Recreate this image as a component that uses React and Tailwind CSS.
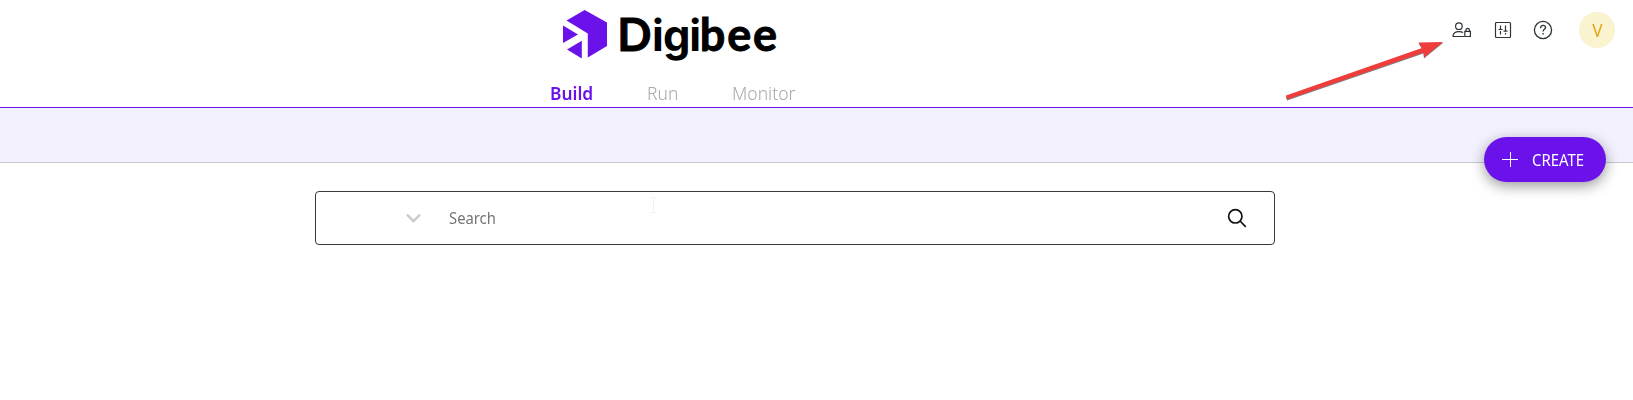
function Logo() {
  return (
    <div className="flex h-[70px] w-[240px]">
      <svg width="240" height="70" viewBox="0 0 240 70" aria-label="Digibee">
        <path d="M34.7 10 57 22.5V46L37.8 57.6V33.5L16.5 20.5Z" fill="#6b12ea" />
        <path d="M13 25.5 28 34.5 13 43Z" fill="#6b12ea" />
        <path d="M17 49.5 31.8 40.8V58.5Z" fill="#6b12ea" />
        <text
          y="50.500"
          x="67.300 102 113 139.300 149.700 177.300 203"
          fontSize="45"
          stroke="#000"
          strokeWidth="0.900"
          className="fill-black font-['Lato',sans-serif] font-bold"
        >
          D<tspan fontSize="43.500" strokeWidth="0" className="font-['Inter',sans-serif]">igi</tspan>bee
        </text>
      </svg>
    </div>
  );
}

function HeaderIcons() {
  return (
    <div className="mt-[12px] flex items-center text-[#2d3236]">
      <svg width="20" height="20" viewBox="0 0 20 20" fill="none" stroke="currentColor" strokeWidth="1.2">
        <circle cx="6.9" cy="6.2" r="3.3" />
        <path d="M12 16.500H1c0-3.300 2.200-4.900 6-4.900 1.700 0 3 .3 4.100 1" />
        <path d="M12.800 11.300h5.600v5.200h-5.600zM14 11.300V10a1.700 1.700 0 0 1 3.400 0v1.300" />
      </svg>
      <svg className="ml-[22px]" width="18" height="18" viewBox="0 0 18 18" fill="none" stroke="currentColor" strokeWidth="1.200">
        <rect x="1.500" y="1.500" width="15" height="15" rx="1" />
        <path d="M6.500 4.500V8M6.500 10v3.500M4.500 8.500h4M11.500 4.500V10M11.500 12v1.500M9.500 10.200h4" />
      </svg>
      <svg className="ml-[21px]" width="20" height="20" viewBox="0 0 20 20" fill="none" stroke="currentColor" strokeWidth="1.300">
        <circle cx="10" cy="10" r="8.600" />
        <path d="M7.600 8.200c0-3.700 5-3.400 5-.7 0 1.800-2.500 1.900-2.500 4M10.100 13v1.500" />
      </svg>
      <div className="ml-[26px] flex size-9 items-center justify-center rounded-full bg-[#f9f3d0] text-[18px] text-[#e2a51c]">
        <span className="scale-x-95">V</span>
      </div>
    </div>
  );
}

export default function App() {
  return (
    <div className="relative h-[400px] w-[1633px] overflow-hidden bg-white font-['Noto_Sans',sans-serif]">
      <header className="flex h-[108px] border-b border-[#6b12ea]">
        <div className="ml-[550px] flex w-[300px] flex-col">
          <Logo />
          <nav className="mt-[9px] flex text-[18px] leading-[28px] text-[#a8a8a8]">
            <a className="w-[97px]"><span className="inline-block origin-left scale-x-[0.965] font-semibold text-[#6b12ea]">Build</span></a>
            <a className="w-[85px]"><span className="inline-block origin-left scale-x-[0.970] font-light">Run</span></a>
            <a><span className="inline-block origin-left scale-x-[0.975] font-light">Monitor</span></a>
          </nav>
        </div>
        <div className="ml-auto mr-[18px]">
          <HeaderIcons />
        </div>
      </header>

      <div className="flex h-[55px] justify-end border-b border-[#c5c9d0] bg-[#f3f1fe] pr-[27px] pt-[29px]">
        <button className="relative flex h-[45px] w-[122px] items-center rounded-full bg-[#6b12ea] pl-[18px] text-[16px] text-white shadow-[0_4px_14px_rgba(0,0,0,0.4)]">
          <svg width="16" height="16" viewBox="0 0 16 16" stroke="currentColor" strokeWidth="1">
            <path d="M0 7.500h16M8.500 0v15" />
          </svg>
          <span className="ml-[14px] origin-left scale-x-[0.93]">CREATE</span>
        </button>
      </div>

      <div className="ml-[315px] mt-[28px] flex h-[54px] w-[960px] items-center rounded-[4px] border border-[#343a40]">
        <svg className="ml-[90px]" width="15" height="10" viewBox="0 0 15 10" fill="none" stroke="#cccccc" strokeWidth="2.500">
          <path d="M1 1.700 7.500 8.200 14 1.700" />
        </svg>
        <span className="ml-[28px] origin-left scale-x-[0.925] text-[16px] text-[#757575]">Search</span>
        <svg className="ml-auto mr-[27px]" width="20" height="20" viewBox="0 0 20 20" fill="none" stroke="#111" strokeWidth="1.700">
          <circle cx="8.300" cy="8.300" r="6.700" />
          <path d="m13 13 5.800 5.800" />
        </svg>
      </div>

      <svg className="pointer-events-none absolute left-[649px] top-[196px]" width="10" height="18" stroke="#f1f1f1">
        <path d="M1 1.500h3M5 1.500h3M1 16.500h3M5 16.500h3M4.500 2v14" />
      </svg>
      <svg className="pointer-events-none absolute left-[1270px] top-[30px] drop-shadow-[0_1px_0.500px_rgba(0,0,0,0.500)]" width="180" height="75" fill="#f13c3c">
        <path d="M16 65.500 152 18 148.500 12.500 173 12 154 27.500 153.500 22.500 17 69.500Z" />
      </svg>
    </div>
  );
}
